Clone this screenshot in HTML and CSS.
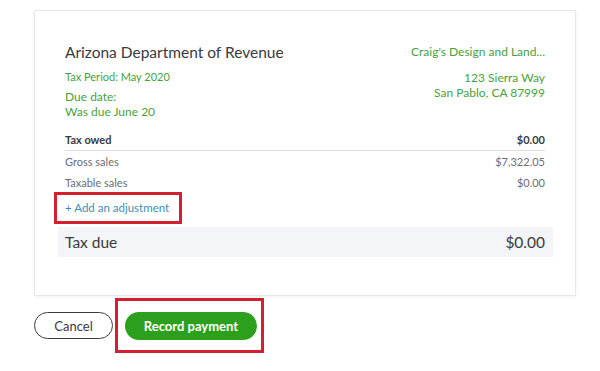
FILE: index.html
```html
<!doctype html>
<html>
    <head>
        <title>Tax payment</title>
        <meta charset="UTF-8">
        <meta name="viewport" content="width=device-width, initial-scale=1">
        <link rel="stylesheet" href="styles.css">
    </head>
    <body>

       <div class="card">
         <div class="head">
           <div class="agency">
             <h1>Arizona Department of Revenue</h1>
             <p class="period">Tax Period: May 2020</p>
             <p class="due">Due date:<br>Was due June 20</p>
           </div>
           <div class="company">
             <p class="name">Craig's Design and Land...</p>
             <p class="address">123 Sierra Way<br>San Pablo, CA 87999</p>
           </div>
         </div>

         <ul class="lines">
           <li class="owed"><span>Tax owed</span><span>$0.00</span></li>
           <li><span>Gross sales</span><span>$7,322.05</span></li>
           <li><span>Taxable sales</span><span>$0.00</span></li>
         </ul>

         <div class="adjust">
           <a href="#" class="marked">+ Add an adjustment</a>
         </div>

         <div class="total"><span>Tax due</span><span>$0.00</span></div>
       </div>

       <div class="actions">
         <button type="button" class="cancel">Cancel</button>
         <span class="marked">
           <button type="button" class="record">Record payment</button>
         </span>
       </div>

    </body>
</html>
```

FILE: styles.css
```css
body {
    margin: 0;
    background: #fff;
    font-family: Lato, "Open Sans", sans-serif;
    color: #393a3d;
}

p {
    margin: 0;
}

.card {
    box-sizing: border-box;
    width: 542px;
    height: 286px;
    margin: 10px 0 0 34px;
    padding: 31px 30px 0 30px;
    border: 1px solid #e6e7e9;
    box-shadow: 0 1px 3px rgba(0, 0, 0, 0.06);
}

.head {
    display: flex;
    justify-content: space-between;
    color: #46a23a;
}

h1 {
    margin: 0;
    font-size: 15.5px;
    font-weight: normal;
    line-height: 20px;
    color: #393a3d;
}

.period {
    margin-top: 8px;
    font-size: 11px;
    line-height: 14px;
}

.due {
    margin-top: 5px;
    font-size: 12px;
    line-height: 15px;
}

.company {
    text-align: right;
}

.name {
    font-size: 12px;
    line-height: 20px;
}

.address {
    margin-top: 8px;
    font-size: 12px;
    line-height: 15px;
}

.lines {
    list-style: none;
    margin: 10px 0 0 0;
    padding: 0;
    font-size: 11px;
    color: #6b6c72;
}

.lines li {
    display: flex;
    justify-content: space-between;
    height: 21px;
    line-height: 21px;
}

.lines .owed {
    font-weight: bold;
    color: #393a3d;
    border-bottom: 1px solid #dcdee2;
}

.adjust {
    margin: -1px 0 0 -11px;
}

.marked {
    display: inline-block;
    border: 3px solid #d2202f;
}

.adjust a {
    padding: 6px 10px 6px 8px;
    font-size: 11.5px;
    line-height: 14px;
    color: #3a8fb7;
    text-decoration: none;
}

.total {
    display: flex;
    justify-content: space-between;
    margin: 3px -8px 0 -7px;
    padding: 0 8px 0 7px;
    height: 30px;
    line-height: 30px;
    background: #f4f5f8;
    font-size: 15.5px;
}

.actions {
    display: flex;
    align-items: center;
    gap: 2px;
    margin: 2px 0 0 34px;
}

button {
    font-family: Lato, "Open Sans", sans-serif;
    font-size: 13px;
    height: 27px;
    border-radius: 14px;
    cursor: pointer;
}

.cancel {
    width: 79px;
    border: 1.5px solid #393a3d;
    background: #fff;
    color: #393a3d;
}

.actions .marked {
    padding: 11px 4px 10px 7px;
}

.record {
    display: block;
    width: 132px;
    height: 28px;
    border: 0;
    background: #2ca01c;
    color: #fff;
    font-weight: bold;
}
```
